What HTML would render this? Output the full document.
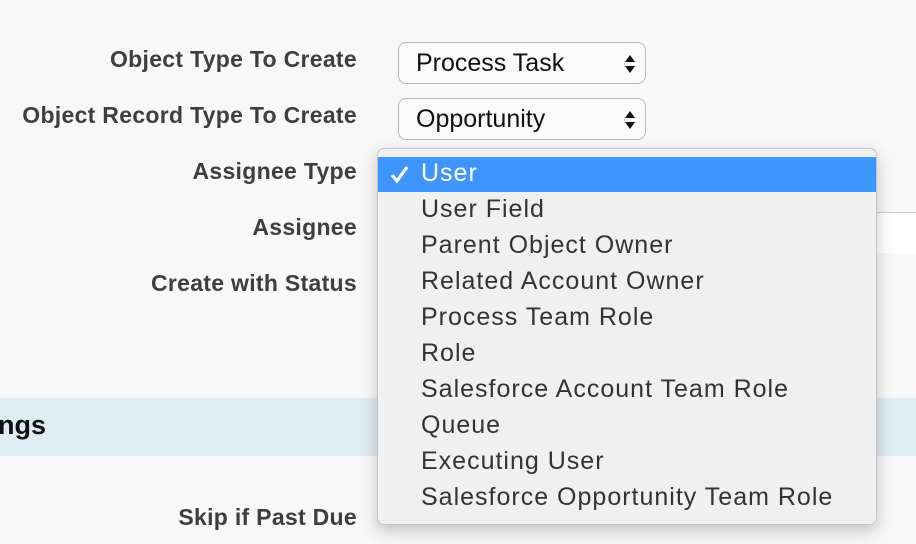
<!DOCTYPE html>
<html><head><style>
body{margin:0;width:916px;height:544px;background:#f8f8f8;position:relative;overflow:hidden;font-family:"Liberation Sans",sans-serif}
.lbl{position:absolute;right:559px;font-weight:bold;font-size:23px;color:#3e3e3c;white-space:nowrap;letter-spacing:0.3px}
.sel{position:absolute;left:398px;width:246px;height:40px;border:1.5px solid #b8b8b8;border-radius:8px;background:#fafafa;font-size:25px;line-height:41px;color:#111;box-sizing:content-box}
.sel span{position:absolute;left:17px}
.band{position:absolute;left:0;top:398px;width:916px;height:58px;background:#deebf2}
.dd{position:absolute;left:377px;top:148px;width:498px;height:375px;background:#f0f0f0;border:1px solid #c4c4c4;border-radius:7px;box-shadow:0 6px 16px rgba(0,0,0,.22)}
.it{position:absolute;left:43px;font-size:25px;color:#333;white-space:nowrap;letter-spacing:1px}
</style></head><body>
<div class="lbl" style="top:46px">Object Type To Create</div>
<div class="lbl" style="top:102px">Object Record Type To Create</div>
<div class="lbl" style="top:158px">Assignee Type</div>
<div class="lbl" style="top:214px">Assignee</div>
<div class="lbl" style="top:270px">Create with Status</div>
<div class="sel" style="top:42px"><span>Process Task</span><svg style="position:absolute;right:9px;top:11px" width="12" height="20"><path d="M6 1 L11 8 H1Z M6 19 L11 12 H1Z" fill="#111"/></svg></div>
<div class="sel" style="top:98px"><span>Opportunity</span><svg style="position:absolute;right:9px;top:11px" width="12" height="20"><path d="M6 1 L11 8 H1Z M6 19 L11 12 H1Z" fill="#111"/></svg></div>
<div style="position:absolute;left:860px;top:212px;width:56px;height:40px;background:#fff;border-top:1px solid #ccc"></div>
<div class="band"></div>
<div style="position:absolute;left:-2px;top:410px;font-size:27px;font-weight:bold;color:#111">ngs</div>
<div class="lbl" style="top:504px">Skip if Past Due</div>
<div class="dd">
<div style="position:absolute;left:0;top:8px;width:498px;height:35px;background:#3d95fd"></div>
<svg style="position:absolute;left:12px;top:16px" width="20" height="20"><path d="M2 10 L7 16 L17 2" stroke="#fff" stroke-width="3.2" fill="none"/></svg>
<div class="it" style="top:10px;color:#fff">User</div>
<div class="it" style="top:46px">User Field</div>
<div class="it" style="top:82px">Parent Object Owner</div>
<div class="it" style="top:118px">Related Account Owner</div>
<div class="it" style="top:154px">Process Team Role</div>
<div class="it" style="top:190px">Role</div>
<div class="it" style="top:226px">Salesforce Account Team Role</div>
<div class="it" style="top:262px">Queue</div>
<div class="it" style="top:298px">Executing User</div>
<div class="it" style="top:334px">Salesforce Opportunity Team Role</div>
</div>
</body></html>
